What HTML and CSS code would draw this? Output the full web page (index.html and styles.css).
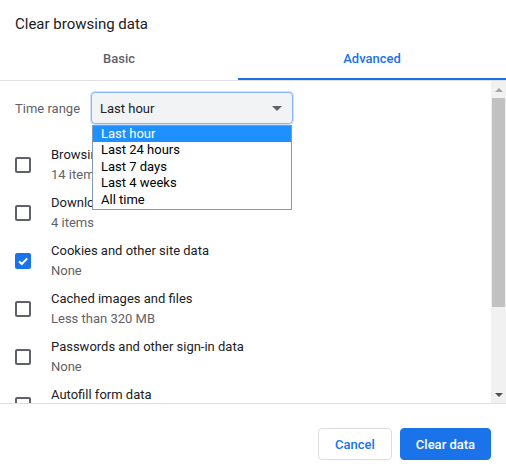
FILE: index.html
```html
<!DOCTYPE html>
<html>
<head>
<meta charset="utf-8">
<link rel="stylesheet" href="styles.css">
</head>
<body>
<div class="dialog">
  <div class="title">Clear browsing data</div>
  <div class="tabs">
    <div class="tab tab-basic">Basic</div>
    <div class="tab tab-active">Advanced</div>
  </div>
  <div class="body">
    <div class="content">
      <div class="range-row">
        <span class="range-label">Time range</span>
        <div class="select-wrap">
          <div class="select">
            <span>Last hour</span>
            <span class="arrow"></span>
          </div>
          <div class="options">
            <div class="option selected">Last hour</div>
            <div class="option">Last 24 hours</div>
            <div class="option">Last 7 days</div>
            <div class="option">Last 4 weeks</div>
            <div class="option">All time</div>
          </div>
        </div>
      </div>
      <div class="item">
        <span class="box"></span>
        <div class="texts"><div class="label">Browsing history</div><div class="sub">14 items</div></div>
      </div>
      <div class="item">
        <span class="box"></span>
        <div class="texts"><div class="label">Download history</div><div class="sub">4 items</div></div>
      </div>
      <div class="item">
        <span class="box checked"><svg width="12" height="12" viewBox="0 0 12 12"><path d="M2 6.2 L4.8 9 L10.2 3.4" fill="none" stroke="#fff" stroke-width="2"/></svg></span>
        <div class="texts"><div class="label">Cookies and other site data</div><div class="sub">None</div></div>
      </div>
      <div class="item">
        <span class="box"></span>
        <div class="texts"><div class="label">Cached images and files</div><div class="sub">Less than 320 MB</div></div>
      </div>
      <div class="item">
        <span class="box"></span>
        <div class="texts"><div class="label">Passwords and other sign-in data</div><div class="sub">None</div></div>
      </div>
      <div class="item">
        <span class="box"></span>
        <div class="texts"><div class="label">Autofill form data</div><div class="sub">None</div></div>
      </div>
    </div>
    <div class="scrollbar">
      <div class="sb-btn"><span class="sb-up"></span></div>
      <div class="sb-track"><div class="sb-thumb"></div></div>
      <div class="sb-btn"><span class="sb-down"></span></div>
    </div>
  </div>
  <div class="footer">
    <button class="btn btn-cancel">Cancel</button>
    <button class="btn btn-primary">Clear data</button>
  </div>
</div>
</body>
</html>
```
FILE: styles.css
```css
html, body {
  margin: 0;
  padding: 0;
  background: #fff;
}
body {
  font-family: Roboto, "Liberation Sans", sans-serif;
  font-size: 13px;
  color: #202124;
  width: 506px;
  height: 471px;
  overflow: hidden;
}
.dialog {
  display: flex;
  flex-direction: column;
  height: 471px;
}
.title {
  padding: 14px 0 1px 15px;
  font-size: 15px;
  line-height: 20px;
  color: #202124;
}
.tabs {
  display: flex;
  border-bottom: 1px solid #e0e0e0;
}
.tab {
  padding: 14px 0 9px;
  line-height: 20px;
  text-align: center;
  font-weight: 500;
  border-bottom: 2px solid transparent;
}
.tab-basic {
  width: 238px;
  color: #5f6368;
}
.tab-active {
  flex: 1;
  color: #1a73e8;
  border-bottom-color: #1a73e8;
}
.body {
  display: flex;
  height: 322px;
  overflow: hidden;
}
.content {
  flex: 1;
  padding-top: 11px;
  overflow: hidden;
}
.range-row {
  display: flex;
  align-items: center;
  padding-left: 15px;
  height: 32px;
  margin-bottom: 21px;
}
.range-label {
  color: #5f6368;
  width: 76px;
}
.select-wrap {
  position: relative;
}
.select {
  box-sizing: border-box;
  width: 202px;
  height: 32px;
  border: 1px solid #8ab4f8;
  border-radius: 4px;
  background: #f1f3f4;
  display: flex;
  align-items: center;
  justify-content: space-between;
  padding: 0 10px 0 8px;
  box-shadow: 0 0 0 1px rgba(138,180,248,0.4);
}
.arrow {
  width: 0;
  height: 0;
  border-left: 5px solid transparent;
  border-right: 5px solid transparent;
  border-top: 5px solid #5f6368;
}
.options {
  position: absolute;
  left: 1px;
  top: 33px;
  width: 200px;
  box-sizing: border-box;
  border: 1px solid #7f9db9;
  background: #fff;
  z-index: 2;
  padding-bottom: 1px;
}
.option {
  height: 16.4px;
  line-height: 16px;
  padding-left: 8px;
  color: #000;
}
.option.selected {
  background: #1e90ff;
  color: #fff;
}
.item {
  display: flex;
  align-items: center;
  padding-left: 15px;
  margin-bottom: 8px;
}
.box {
  box-sizing: border-box;
  width: 16px;
  height: 16px;
  border: 2px solid #5f6368;
  border-radius: 2px;
  margin-right: 20px;
  display: flex;
  align-items: center;
  justify-content: center;
  flex: none;
}
.box.checked {
  background: #1a73e8;
  border-color: #1a73e8;
}
.texts {
  line-height: 20px;
  white-space: nowrap;
}
.label {
  color: #202124;
}
.sub {
  color: #5f6368;
}
.scrollbar {
  width: 15px;
  background: #f1f1f1;
  display: flex;
  flex-direction: column;
}
.sb-btn {
  height: 17px;
  display: flex;
  align-items: center;
  justify-content: center;
}
.sb-up {
  width: 0;
  height: 0;
  border-left: 4px solid transparent;
  border-right: 4px solid transparent;
  border-bottom: 4px solid #a3a3a3;
}
.sb-down {
  width: 0;
  height: 0;
  border-left: 4px solid transparent;
  border-right: 4px solid transparent;
  border-top: 4px solid #505050;
}
.sb-track {
  flex: 1;
  padding: 0 1px;
}
.sb-thumb {
  height: 209px;
  background: #c1c1c1;
}
.footer {
  border-top: 1px solid #e0e0e0;
  flex: 1;
  display: flex;
  justify-content: flex-end;
  align-items: flex-start;
  padding: 24px 15px 0 0;
  gap: 8px;
}
.btn {
  font-family: Roboto, "Liberation Sans", sans-serif;
  font-size: 13px;
  font-weight: 500;
  height: 32px;
  border-radius: 4px;
  padding: 0;
  white-space: nowrap;
  cursor: pointer;
}
.btn-cancel {
  background: #fff;
  color: #1a73e8;
  border: 1px solid #dadce0;
  width: 74px;
}
.btn-primary {
  background: #1a73e8;
  color: #fff;
  border: 1px solid #1a73e8;
  width: 91px;
}
```
